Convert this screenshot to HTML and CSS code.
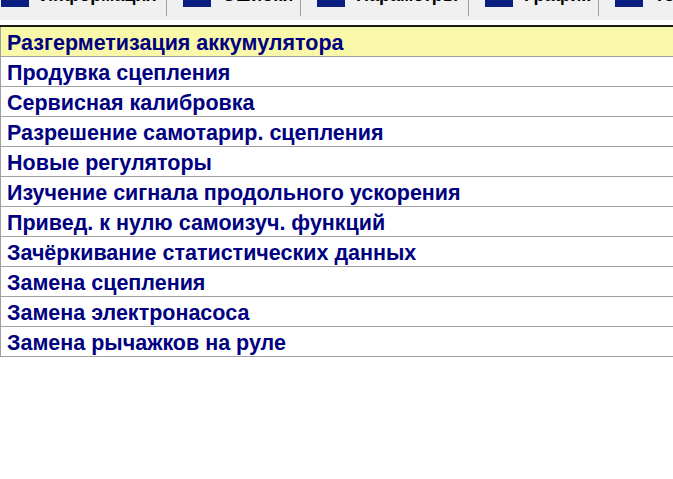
FILE: index.html
```
<!DOCTYPE html>
<html lang="ru">
<head>
    <meta charset="UTF-8">
    <meta name="viewport" content="width=device-width, initial-scale=1.0">
    <title>Сервисные функции</title>
    <link rel="stylesheet" href="styles.css">
</head>
<body>
    <div class="tabs">
        <div class="tab tab-info"><span class="tab-icon"></span><span class="tab-label">Информация</span></div>
        <div class="tab tab-errors"><span class="tab-icon"></span><span class="tab-label">Ошибки</span></div>
        <div class="tab tab-params"><span class="tab-icon"></span><span class="tab-label">Параметры</span></div>
        <div class="tab tab-chart"><span class="tab-icon"></span><span class="tab-label">График</span></div>
        <div class="tab"><span class="tab-icon"></span><span class="tab-label">Тесты</span></div>
    </div>
    <div class="rule"></div>
    <ul class="menu-list">
        <li class="menu-item selected">Разгерметизация аккумулятора</li>
        <li class="menu-item">Продувка сцепления</li>
        <li class="menu-item">Сервисная калибровка</li>
        <li class="menu-item">Разрешение самотарир. сцепления</li>
        <li class="menu-item">Новые регуляторы</li>
        <li class="menu-item">Изучение сигнала продольного ускорения</li>
        <li class="menu-item">Привед. к нулю самоизуч. функций</li>
        <li class="menu-item">Зачёркивание статистических данных</li>
        <li class="menu-item">Замена сцепления</li>
        <li class="menu-item">Замена электронасоса</li>
        <li class="menu-item">Замена рычажков на руле</li>
    </ul>
</body>
</html>
```
FILE: styles.css
```
body {
    margin: 0;
    background-color: #fff;
    font-family: 'Liberation Sans', Arial, sans-serif;
    overflow: hidden;
}
.tabs {
    display: flex;
    height: 20px;
    background-color: #f0f0f0;
    overflow: hidden;
    white-space: nowrap;
}
.tab {
    display: flex;
    align-items: flex-start;
    flex-shrink: 0;
    box-sizing: border-box;
    height: 16px;
    padding-left: 16px;
    border-left: 1px solid #a0a0a0;
}
.tab-info {
    width: 166px;
    padding-left: 1px;
    border-left: none;
}
.tab-errors {
    width: 134px;
}
.tab-params {
    width: 168px;
}
.tab-chart {
    width: 130px;
}
.tab-icon {
    flex-shrink: 0;
    width: 28px;
    height: 7px;
    margin-right: 11px;
    background-color: #0a1f80;
}
.tab-label {
    font-size: 18px;
    font-weight: bold;
    line-height: 18px;
    margin-top: -14px;
    color: #000;
}
.rule {
    height: 2px;
    margin-top: 5px;
    background-color: #1a1a1a;
}
.menu-list {
    list-style: none;
    margin: 0;
    padding: 0;
    border-left: 1px solid #a0a0a0;
}
.menu-item {
    height: 27px;
    padding-top: 2px;
    line-height: 29px;
    padding-left: 6px;
    border-bottom: 1px solid #a0a0a0;
    font-size: 21.5px;
    font-weight: bold;
    color: #000080;
    white-space: nowrap;
}
.menu-item.selected {
    background-color: #f8f8a8;
}
```
